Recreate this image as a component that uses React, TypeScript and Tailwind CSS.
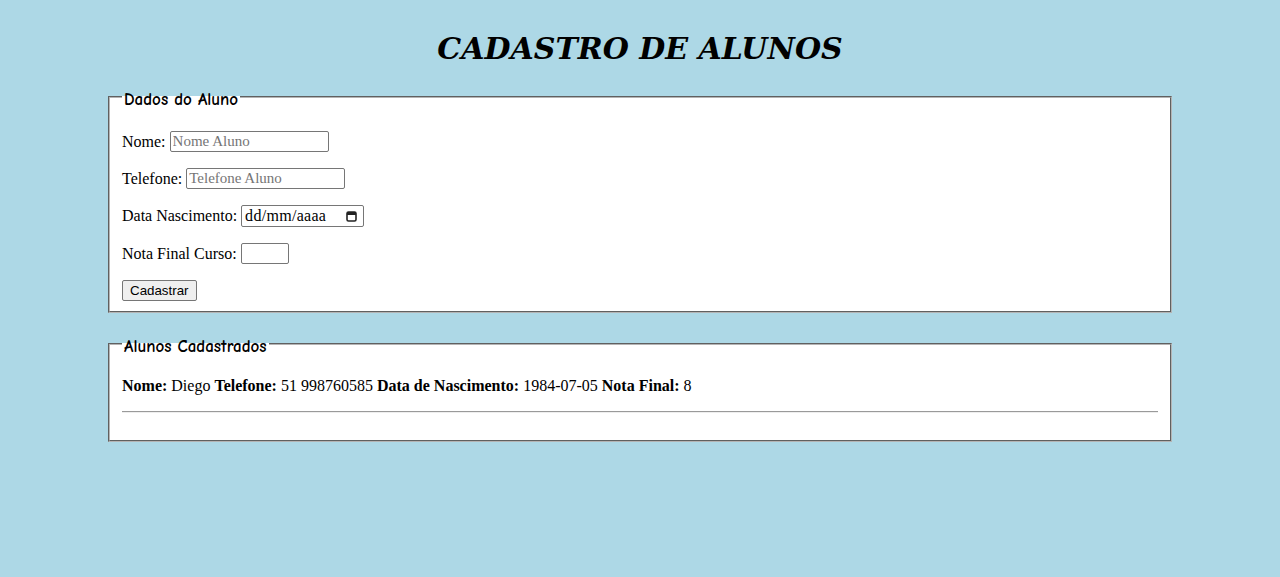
import React from 'react';

const serif = "font-['Liberation_Serif','Times_New_Roman',serif]";
const legendFont = "font-['Comic_Sans_MS','Comic_Neue','DejaVu_Sans',cursive]";

const Field: React.FC<{ label: string; className?: string; children: React.ReactNode }> = ({ label, className, children }) => (
  <p className={`flex items-center gap-1 ${className ?? 'mt-4 h-[21px]'}`}>
    <span>{label}</span>
    {children}
  </p>
);

export default function App() {
  return (
    <div className={`min-h-screen bg-[#add8e6] text-black text-[16px] ${serif}`}>
      <h1 className="pt-[30px] text-center text-[30px] leading-[37px] font-bold italic font-['DejaVu_Serif',serif]">
        CADASTRO DE ALUNOS
      </h1>

      <div className="mx-[108px] mt-[19px]">
        {/* Dados do Aluno */}
        <fieldset className="bg-white border-2 [border-style:groove] border-[#b4b4b4] px-3 pb-[10px]">
          <legend className={`px-[2px] text-[17px] leading-[22px] font-bold translate-y-[3px] ${legendFont}`}>Dados do Aluno</legend>

          <Field label="Nome:" className="mt-[23px] h-[21px]">
            <input
              type="text"
              placeholder="Nome Aluno"
              className={`w-[159px] h-[21px] border border-[#767676] rounded-[2px] px-[2px] text-[15px] placeholder:text-[#757575] ${serif}`}
            />
          </Field>

          <Field label="Telefone:">
            <input
              type="text"
              placeholder="Telefone Aluno"
              className={`w-[159px] h-[21px] border border-[#767676] rounded-[2px] px-[2px] text-[15px] placeholder:text-[#757575] ${serif}`}
            />
          </Field>

          <Field label="Data Nascimento:" className="mt-4 h-[22px]">
            <span className="w-[123px] h-[22px] border border-[#767676] rounded-[2px] pl-[3px] pr-[6px] flex items-center justify-between">
              <span className="text-[16px] tracking-[0.3px]">dd/mm/aaaa</span>
              <svg width="11" height="12" viewBox="0 0 11 12">
                <rect x="1" y="2" width="9" height="9" rx="1.5" fill="none" stroke="#222" strokeWidth="1.6" />
                <rect x="1" y="2" width="9" height="3" fill="#222" />
              </svg>
            </span>
          </Field>

          <Field label="Nota Final Curso:">
            <input
              type="number"
              className="w-[48px] h-[21px] border border-[#767676] rounded-[2px] px-[2px]"
            />
          </Field>

          <p className="mt-4 h-[21px] flex">
            <button className="h-[21px] px-[7px] border border-[#767676] rounded-[2px] bg-[#efefef] text-[13.33px] leading-none font-['Liberation_Sans',Arial,sans-serif]">
              Cadastrar
            </button>
          </p>
        </fieldset>

        {/* Alunos Cadastrados */}
        <fieldset className="mt-[20px] bg-white border-2 [border-style:groove] border-[#b4b4b4] px-3 pb-[27px]">
          <legend className={`px-[2px] text-[17px] leading-[22px] font-bold translate-y-[3px] ${legendFont}`}>Alunos Cadastrados</legend>
          <p className="mt-[21px] leading-[20px]">
            <b>Nome:</b> Diego <b>Telefone:</b> 51 998760585 <b>Data de Nascimento:</b> 1984-07-05 <b>Nota Final:</b> 8
          </p>
          <hr className="mt-[15px] border-t border-t-[#9a9a9a] border-b border-b-[#eeeeee]" />
        </fieldset>
      </div>
    </div>
  );
}
